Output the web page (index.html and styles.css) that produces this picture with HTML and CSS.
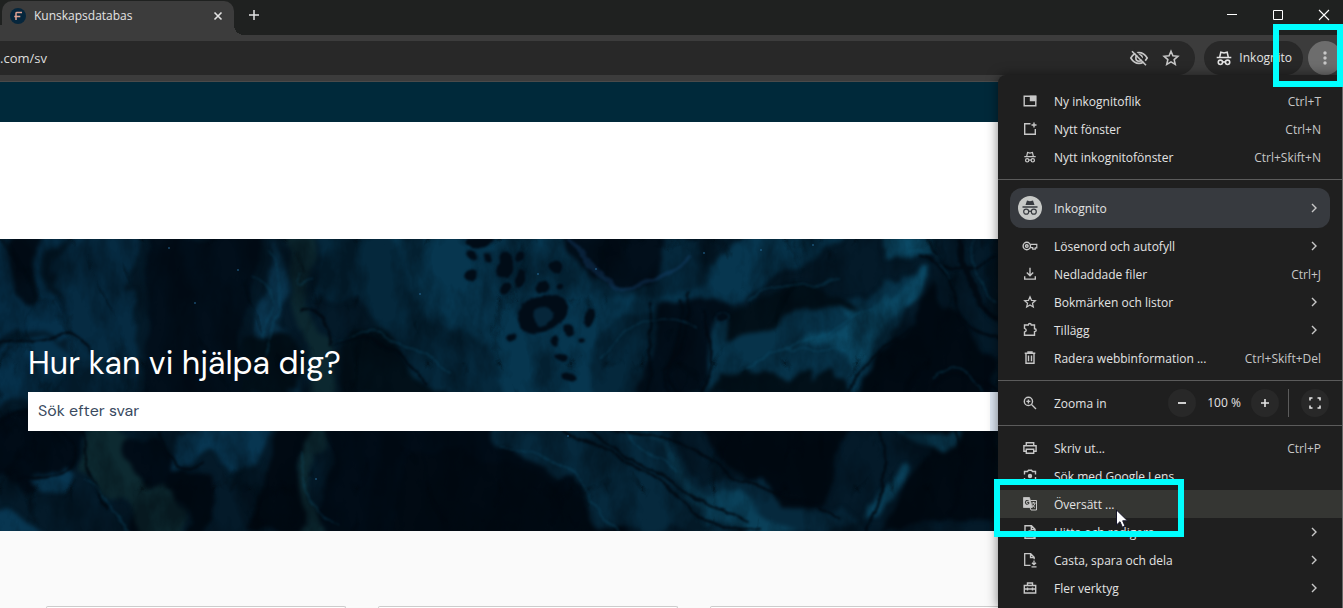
FILE: index.html
```html
<!DOCTYPE html>
<html lang="sv">
<head>
<meta charset="utf-8">
<title>Kunskapsdatabas</title>
<link rel="stylesheet" href="styles.css">
</head>
<body>
<svg class="sprite" aria-hidden="true">
  <symbol id="chevron" viewBox="0 0 16 16"><path d="M6 4l4 4-4 4"/></symbol>
  <symbol id="incognito" viewBox="0 0 16 16"><path d="M1.5 7.5h13M4.2 7.2l1-4.4 2.8.7 2.8-.7 1 4.4M6.8 11.8q1.2-.9 2.4 0"/><circle cx="4.8" cy="11.8" r="1.9"/><circle cx="11.2" cy="11.8" r="1.9"/></symbol>
  <symbol id="star" viewBox="0 0 16 16"><path d="M8 2l1.7 4.1 4.4.4-3.3 2.9 1 4.3L8 11.4l-3.8 2.3 1-4.3-3.3-2.9 4.4-.4z"/></symbol>
</svg>

<header class="browser">
  <div class="tabstrip">
    <div class="tab">
      <svg class="favicon" viewBox="0 0 16 16"><circle cx="8" cy="8" r="8" fill="#06263c"/><path d="M6 12V5.2Q6 4.6 7 4.6h5M4.3 8.4h6" fill="none" stroke="#e0a293" stroke-width="1.5"/></svg>
      <span class="tab-title">Kunskapsdatabas</span>
      <button class="tab-close" aria-label="Stäng flik"><svg class="icon" viewBox="0 0 16 16"><path d="M4.5 4.5l7 7M11.5 4.5l-7 7" stroke-width="1.6"/></svg></button>
    </div>
    <button class="new-tab" aria-label="Ny flik"><svg class="icon" viewBox="0 0 16 16"><path d="M8 3v10M3 8h10" stroke-width="1.5"/></svg></button>
    <div class="window-controls">
      <button aria-label="Minimera"><svg class="icon" viewBox="0 0 16 16"><path d="M3 7.5h10" stroke-width="1"/></svg></button>
      <button aria-label="Maximera"><svg class="icon" viewBox="0 0 16 16"><path d="M3.5 3.5h9v9h-9z" stroke-width="1"/></svg></button>
      <button aria-label="Stäng"><svg class="icon" viewBox="0 0 16 16"><path d="M3 3l10 10M13 3L3 13" stroke-width="1.1"/></svg></button>
    </div>
  </div>
  <div class="toolbar">
    <div class="omnibox">
      <input class="address" type="text" aria-label="Adress" value=".com/sv">
      <button aria-label="Spårning blockerad"><svg class="icon icon-20" viewBox="0 0 20 20"><path d="M1.8 10Q5 4.6 10 4.6T18.200 10Q15 15.400 10 15.400T1.800 10zM13.200 10a3.200 3.200 0 1 1-6.400 0 3.200 3.200 0 0 1 6.400 0z" stroke-width="1.6"/><path d="M4.600 2.400L17.800 15.600" stroke="#282828" stroke-width="2"/><path d="M3 3.200l14 14" stroke-width="1.600"/></svg></button>
      <button aria-label="Lägg till bokmärke"><svg class="icon icon-18"><use href="#star"/></svg></button>
    </div>
    <button class="chip"><svg class="icon icon-18"><use href="#incognito"/></svg>Inkognito</button>
    <button class="kebab" aria-label="Meny"><svg viewBox="0 0 16 16"><circle cx="8" cy="3" r="1.7"/><circle cx="8" cy="8" r="1.7"/><circle cx="8" cy="13" r="1.7"/></svg></button>
  </div>
</header>

<main class="page">
  <div class="site-bar"></div>
  <div class="site-header"></div>
  <section class="hero">
    <svg class="marble" viewBox="0 0 1343 292" preserveAspectRatio="xMinYMin slice" aria-hidden="true">
      <defs>
        <filter id="flow" x="-5%" y="-10%" width="110%" height="120%" color-interpolation-filters="sRGB"><feTurbulence type="fractalNoise" baseFrequency=".018 .012" numOctaves="4" seed="8"/><feDisplacementMap in="SourceGraphic" scale="50" xChannelSelector="R" yChannelSelector="G"/><feGaussianBlur stdDeviation="2"/></filter>
        <filter id="fine" x="-5%" y="-10%" width="110%" height="120%" color-interpolation-filters="sRGB"><feTurbulence type="fractalNoise" baseFrequency=".025" numOctaves="4" seed="3"/><feDisplacementMap in="SourceGraphic" scale="16" xChannelSelector="R" yChannelSelector="G"/><feGaussianBlur stdDeviation="1"/></filter>
        <filter id="veins" x="0" y="0" width="100%" height="100%" color-interpolation-filters="sRGB"><feTurbulence type="turbulence" baseFrequency=".014 .008" numOctaves="5" seed="21"/><feColorMatrix values="0 0 0 0 0  0 0 0 0 .02  0 0 0 0 .04  -7 0 0 0 1"/></filter>
        <filter id="shade" x="0" y="0" width="100%" height="100%" color-interpolation-filters="sRGB"><feTurbulence type="fractalNoise" baseFrequency=".03 .016" numOctaves="5" seed="5"/><feColorMatrix values="0 0 0 0 0  0 0 0 0 .025  0 0 0 0 .05  2.600 0 0 0 -.950"/></filter>
      </defs>
      <rect width="1343" height="292" fill="#041a29"/>
      <g filter="url(#flow)">
        <path fill="#06304a" d="M-20-20H62Q48 50 70 80L60 96-20 100zM-20 110L60 100 84 120 75 160-20 170z"/>
        <path fill="#062b42" d="M64-10H130V170H70z"/>
        <path fill="#020f1b" d="M14-10H46L44 60Q30 90 16 60zM142-10H250L240 170H140z"/>
        <path fill="#0a3650" d="M272 0Q300 20 286 60 268 90 285 120L290 160 270 120Q250 80 264 50z"/>
        <path fill="#05283c" d="M318-10H700V180H400Q390 60 318 60z"/>
        <path fill="#0c2830" d="M292-10H318Q300 60 324 110 340 170 318 220 300 270 360 310H300Q310 180 296 120z"/>
        <path fill="#07364f" d="M390-10H570L600 50 640 60 700 30 740-10H860L740 60 600 90 590 160H500Q490 110 440 80 400 60 390-10z"/>
        <path fill="#020f1b" d="M565-10H665Q665 35 632 48 600 45 565-10zM676-10H720Q702 20 676 0zM660 60Q690 40 740 60L700 160H635Q660 100 660 60z"/>
        <path fill="#021019" d="M335 110Q360 90 400 102 420 150 480 160H340zM250 95Q282 90 288 120L285 155H240Q240 120 250 95z"/>
        <path fill="#07334a" d="M710 80Q760 60 820 70L880 30 912 40 905 80 870 140 845 160H700z"/>
        <path fill="#0b4965" d="M835 66L880 45Q900 60 908 30L918 30 920 66 882 85 866 124 846 138 830 116 800 114 830 96 855 78zM890-10H930L915 20 880 12z"/>
        <path fill="#021019" d="M735 70Q790 35 860 62 810 70 770 90L730 110zM720 138Q760 120 820 136L850 160H700z"/>
        <path fill="#010a13" d="M930 50L960 80 990 120V170H850Q880 120 920 80z"/>
        <path fill="#010c17" d="M-20 176Q40 170 80 184 100 250 50 240L30 255-20 230zM120 190Q170 180 180 240 196 270 160 310H120zM325 190H520Q550 230 650 310H330z"/>
        <path fill="#0d2a31" d="M90 185H130Q120 230 145 250 190 230 182 300H140Q130 270 88 240z"/>
        <path fill="#083651" d="M36 236Q70 222 80 242 60 268 38 250zM-20 270L20 270 44 300H-20zM175 180H268Q284 210 250 240 230 250 225 210 200 205 170 226z"/>
        <path fill="#010a13" d="M170 226Q208 210 210 252L200 310H188Q198 250 165 250zM285 188H308L302 240 316 292H240Q280 240 285 188z"/>
        <path fill="#06293d" d="M500 185H640Q680 240 760 250 840 270 870 292H590Q600 250 500 210z"/>
        <path fill="#010a13" d="M690 180H850Q848 230 820 260 730 260 690 180zM920 180H1010V292H880Q930 230 920 180zM400 225Q550 200 610 310H400z"/>
        <path fill="#0a4059" d="M900 186H955L948 205Q915 205 900 190zM890 235Q910 210 902 255L870 280zM620 185Q680 240 750 262L790 292H740Q680 250 620 185z"/>
        <rect x="998" y="-20" width="400" height="340" fill="#03121d"/>
      </g>
      <rect width="1343" height="292" filter="url(#shade)" opacity=".45"/>
      <rect width="1343" height="292" filter="url(#veins)" opacity=".4"/>
      <g filter="url(#fine)" fill="none" stroke="#010810" stroke-width="2.500" opacity=".85">
        <path d="M-10 102Q40 110 62 95T95 130M0 180Q50 160 70 200T20 240M85 185Q80 230 110 270M160 190Q165 250 205 225M300 72Q330 70 333 105 360 85 395 110L430 145M680 60Q688 105 665 130L663 160M690 55Q690 100 675 120T680 160M705 70Q720 120 700 160M650 60Q658 110 640 165"/>
        <path d="M600 190Q700 200 730 240 780 250 840 280M560 190Q640 220 680 260T760 292M580 186Q660 240 750 285M880 190Q890 240 870 292M930 0Q940 50 998 20M920 20Q950 25 955 60T998 100M905 90Q860 120 850 160M935 150Q950 120 998 150M955 190Q970 230 950 275"/>
        <path d="M960 0Q970 60 998 80" stroke-width="6"/>
      </g>
      <g filter="url(#fine)" fill="none" stroke="#0f5f80" stroke-width="1.500" opacity=".3">
        <path d="M254 35Q283 60 264 100M268 10Q290 50 267 120M302 30Q290 60 312 38M333 105Q360 80 396 102T450 130M85 240Q110 260 120 280T145 292M300 215Q300 275 340 285M178 190Q230 190 270 188M500 210Q560 210 590 260T630 292M620 188Q650 220 680 235M935 140Q960 115 982 150M910 15Q940 10 950 40M975 0Q970 40 998 60M750 60Q790 45 840 40M700 90Q650 60 600 120M780 115Q850 80 875 70M740 130Q800 100 850 110"/>
        <path stroke="#1c4f85" stroke-width="4" d="M565 0Q590 35 620 48 660 45 690 18"/>
      </g>
      <g class="cells" filter="url(#fine)">
        <ellipse cx="480" cy="4" rx="12" ry="7"/><circle cx="471" cy="17" r="5"/><circle cx="485" cy="20" r="4"/><circle cx="470" cy="36" r="6"/>
        <ellipse cx="504" cy="27" rx="9" ry="12"/><ellipse cx="521" cy="40" rx="6" ry="13"/><circle cx="507" cy="50" r="6"/><circle cx="519" cy="18" r="5"/><circle cx="541" cy="48" r="6"/><circle cx="556" cy="28" r="7"/><ellipse cx="560" cy="47" rx="5" ry="3"/>
        <ellipse cx="544" cy="75" rx="29" ry="17" transform="rotate(-28 544 75)"/><ellipse cx="542" cy="78" rx="11" ry="7" transform="rotate(-40 542 78)" fill="#06263a"/><ellipse cx="588" cy="77" rx="5" ry="11" transform="rotate(20 588 77)"/><circle cx="568" cy="91" r="6"/><circle cx="554" cy="103" r="5"/><circle cx="580" cy="101" r="3"/><circle cx="511" cy="98" r="5"/><ellipse cx="562" cy="118" rx="7" ry="5"/><ellipse cx="567" cy="139" rx="8" ry="5"/><circle cx="722" cy="78" r="6"/>
      </g>
      <g fill="#2b74a6" opacity=".6"><circle cx="169" cy="9" r="1"/><circle cx="238" cy="31" r="1"/><circle cx="195" cy="64" r="1"/><circle cx="420" cy="55" r="1"/><circle cx="538" cy="35" r="1"/><circle cx="596" cy="30" r="1"/><circle cx="761" cy="11" r="1"/><circle cx="813" cy="6" r="1"/><circle cx="704" cy="14" r="1"/><circle cx="568" cy="197" r="1"/><circle cx="316" cy="240" r="1"/></g>
    </svg>
    <div class="hero-content">
      <h1>Hur kan vi hjälpa dig?</h1>
      <form class="search"><input type="search" aria-label="Sök efter svar" placeholder="Sök efter svar"><button type="button" aria-label="Sök"></button></form>
    </div>
  </section>
  <section class="cards"><article></article><article></article><article></article><article></article></section>
</main>

<nav class="menu" aria-label="Webbläsarmeny">
  <button class="row"><svg class="icon" viewBox="0 0 16 16"><path d="M2.200 3.200h11.600v9.600H2.200z"/><path d="M8.500 3.500h5v4h-5z" fill="currentColor"/></svg><span>Ny inkognitoflik</span><kbd>Ctrl+T</kbd></button>
  <button class="row"><svg class="icon" viewBox="0 0 16 16"><path d="M8.500 2.700H2.700v10.600h10.600V8M12 1.500v5M9.500 4h5"/></svg><span>Nytt fönster</span><kbd>Ctrl+N</kbd></button>
  <button class="row"><svg class="icon icon-14"><use href="#incognito"/></svg><span>Nytt inkognitofönster</span><kbd>Ctrl+Skift+N</kbd></button>
  <hr>
  <button class="row profile"><svg class="avatar" viewBox="0 0 24 24"><circle cx="12" cy="12" r="12" fill="#c7c9c7"/><path d="M7.500 9l1.500-4.500 3 .7 3-.7L16.500 9z" fill="#373a3f"/><path d="M4.500 11h15M10.800 15.500q1.200-.8 2.400 0" fill="none" stroke="#373a3f" stroke-width="1.300"/><g fill="none" stroke="#373a3f" stroke-width="1.200"><circle cx="8.200" cy="15.700" r="2.500"/><circle cx="15.800" cy="15.700" r="2.500"/></g></svg><span>Inkognito</span><svg class="icon more"><use href="#chevron"/></svg></button>
  <button class="row"><svg class="icon" viewBox="0 0 16 16"><circle cx="4.800" cy="8" r="3.700"/><circle cx="4.800" cy="8" r="1.300"/><path d="M8.300 6.300h6.500v3.500h-1.500v1.400h-2.600V9.700H8.300" stroke-width="1.200"/></svg><span>Lösenord och autofyll</span><svg class="icon more"><use href="#chevron"/></svg></button>
  <button class="row"><svg class="icon" viewBox="0 0 16 16"><path d="M8 1.800V9.500M4.800 6.500L8 9.700l3.200-3.200M2.700 10.200v2.900h10.600v-2.900"/></svg><span>Nedladdade filer</span><kbd>Ctrl+J</kbd></button>
  <button class="row"><svg class="icon icon-14"><use href="#star"/></svg><span>Bokmärken och listor</span><svg class="icon more"><use href="#chevron"/></svg></button>
  <button class="row"><svg class="icon" viewBox="0 0 16 16"><path d="M2.500 3h3.800q.2-1.500 1.500-1.500T9.300 3h3.200v3.800q1.700.1 1.700 1.400t-1.700 1.400v3.700h-10V10q1.700-.4 1.700-1.800T2.500 6.300z"/></svg><span>Tillägg</span><svg class="icon more"><use href="#chevron"/></svg></button>
  <button class="row"><svg class="icon" viewBox="0 0 16 16"><path d="M2.700 3.200h10.600M6 3V1.900h4V3M4 3.500v9.800h8V3.500M6.500 5.500v5.800M9.500 5.500v5.800"/></svg><span>Radera webbinformation ...</span><kbd>Ctrl+Skift+Del</kbd></button>
  <hr>
  <div class="row zoom">
    <svg class="icon" viewBox="0 0 16 16"><circle cx="6.400" cy="6.400" r="4.100"/><path d="M9.500 9.500l4.500 4.500M6.400 4.400v4M4.400 6.400h4" /></svg><span>Zooma in</span>
    <button aria-label="Zooma ut"><svg class="icon" viewBox="0 0 16 16"><path d="M4 8h8" stroke-width="1.800"/></svg></button>
    <output>100 %</output>
    <button aria-label="Zooma in"><svg class="icon" viewBox="0 0 16 16"><path d="M4 8h8M8 4v8" stroke-width="1.600"/></svg></button>
    <i class="divider"></i>
    <button aria-label="Helskärm"><svg class="icon" viewBox="0 0 16 16"><path d="M5.500 3H3v2.500M10.500 3H13v2.500M3 10.500V13h2.500M13 10.500V13h-2.500" stroke-width="1.600"/></svg></button>
  </div>
  <hr>
  <button class="row"><svg class="icon" viewBox="0 0 16 16"><path d="M4.300 5.300V2.700h7.400v2.600M4 11.300H1.900V5.700h12.200v5.600H12M4.300 9.300h7.400v4H4.300z"/></svg><span>Skriv ut...</span><kbd>Ctrl+P</kbd></button>
  <button class="row"><svg class="icon" viewBox="0 0 16 16"><path d="M2.500 6.500v-3h3l1-1.200h3l1 1.200h3v3M2.500 10v3.300H8M13.500 9v2"/><circle cx="8" cy="8" r="1.500" fill="currentColor"/><circle cx="12.500" cy="13" r=".6"/></svg><span>Sök med Google Lens</span></button>
  <button class="row selected"><svg class="icon" viewBox="0 0 16 16"><path d="M1.500 1.500h6l2.700 10H1.500z" fill="currentColor" stroke-width=".8"/><path d="M8.500 4.500h6v9.500H9L8 11.500M9.500 7h4M11.500 6v1.200M13 7.200q-.7 2.800-3 4M10.200 8.500q1 2 2.800 3" stroke-width="1"/><path d="M6.600 5q-2.600-1.500-3.200 1.400.7 2.900 3.300 1.200V6.500H5.200" stroke="#353633" stroke-width="1.100"/></svg><span>Översätt ...</span></button>
  <button class="row"><svg class="icon" viewBox="0 0 16 16"><path d="M9.500 1.800H3v12.400h10V5.300zM9.300 2v3.500h3.500"/><circle cx="8" cy="9" r="2"/><path d="M9.500 10.500l3 3"/></svg><span>Hitta och redigera</span><svg class="icon more"><use href="#chevron"/></svg></button>
  <button class="row"><svg class="icon" viewBox="0 0 16 16"><path d="M8.500 13.300H2.700V1.700h6l3.500 3.500v2M8.500 2v3.500H12M12 8.500v4M10 10.700l2 2 2-2M9.500 14.800h5" stroke-width="1.300"/></svg><span>Casta, spara och dela</span><svg class="icon more"><use href="#chevron"/></svg></button>
  <button class="row"><svg class="icon" viewBox="0 0 16 16"><path d="M2.300 9V5.500h11.400V9M5.500 5.300V3h5v2.300M2.300 9h11.400v4H2.300zM5.500 7.500v3M10.500 7.500v3"/></svg><span>Fler verktyg</span><svg class="icon more"><use href="#chevron"/></svg></button>
</nav>

<div class="callout callout-kebab"></div>
<div class="callout callout-translate"></div>
<svg class="cursor" viewBox="0 0 14 20" aria-hidden="true"><path d="M1.500 1v15l3.500-3.300 2.400 5.500 2.600-1.100-2.300-5.300h4.800z" fill="#fff" stroke="#16162a"/></svg>
</body>
</html>
```

FILE: styles.css
```css
* { box-sizing: border-box; }

body {
  position: relative;
  display: flex;
  flex-direction: column;
  height: 100vh;
  margin: 0;
  overflow: hidden;
  background: #fafafa;
  font: 12px/16px "Segoe UI", "Open Sans", sans-serif;
}

button {
  display: flex;
  align-items: center;
  justify-content: center;
  padding: 0;
  border: 0;
  background: none;
  color: inherit;
  font: inherit;
}

input { min-width: 0; border: 0; outline: 0; border-radius: 0; }

.sprite { position: absolute; width: 0; height: 0; }

.icon {
  flex: none;
  width: 16px;
  height: 16px;
  fill: none;
  stroke: currentColor;
  stroke-width: 1.4;
}
.icon-14 { width: 14px; height: 14px; margin: 0 1px; }
.icon-18 { width: 18px; height: 18px; }
.icon-20 { width: 20px; height: 20px; }

/* Browser frame */
.browser { flex: none; background: #3c3c3c; color: #e3e3e3; border-bottom: 1px solid #4a4a4a; }

.tabstrip {
  display: flex;
  height: 35px;
  padding-top: 1px;
  background: linear-gradient(0deg, #3c3c3c 10px, transparent 10px) 0 0 / 4px 100% no-repeat, #1f2120;
}

.tab {
  position: relative;
  display: flex;
  align-items: center;
  gap: 8px;
  width: 232px;
  margin-left: 2px;
  padding: 0 8px 4px;
  border-radius: 10px 10px 0 0;
  background: #3c3c3c;
}
.tab::after {
  content: "";
  position: absolute;
  left: 100%;
  bottom: 0;
  width: 10px;
  height: 10px;
  background: radial-gradient(circle at 100% 0, transparent 10px, #3c3c3c 10px);
}
.favicon { width: 16px; height: 16px; }
.tab-title { flex: 1; }
.new-tab { width: 40px; padding-bottom: 6px; }
.window-controls { display: flex; margin-left: auto; color: #fff; }
.window-controls button { width: 46px; padding-bottom: 6px; }
.window-controls button:last-child { width: 42px; padding-left: 4px; }

.toolbar { display: flex; padding: 6px 1px 6px 0; }
.omnibox {
  display: flex;
  flex: 1;
  gap: 13px;
  height: 34px;
  margin-right: 9px;
  padding-right: 15px;
  border-radius: 0 17px 17px 0;
  background: #282828;
  color: #c7c7c7;
}
.address {
  flex: 1;
  padding: 0;
  background: none;
  color: #dedede;
  font: 13px/20px "Segoe UI", "Open Sans", sans-serif;
}
.chip {
  gap: 6px;
  margin-right: 5px;
  padding: 0 11px;
  border-radius: 17px;
  background: #282828;
}
.kebab { width: 34px; height: 34px; border-radius: 50%; background: #6d6d6d; }
.kebab svg { width: 16px; height: 16px; fill: #c7c7c7; }

/* Site */
.page { flex: 1; display: flex; flex-direction: column; min-height: 0; overflow: hidden; }
.site-bar { flex: none; height: 40px; background: #00293a; }
.site-header { flex: none; height: 117px; background: #fff; }

.hero { position: relative; flex: none; padding: 104px 28px 100px; background: #031522; overflow: hidden; }
.marble { position: absolute; inset: 0; width: 100%; height: 100%; }
.cells { fill: #010c17; stroke: #06263a; }
.hero-content { position: relative; }
.hero h1 {
  margin: 0 0 9px;
  color: #fff;
  font: 400 32px/40px "DM Sans", Inter, sans-serif;
}
.search { display: flex; height: 39px; }
.search input {
  flex: 1;
  padding: 0 10px 2px;
  background: #fff;
  font: 16px/24px "DM Sans", Inter, sans-serif;
}
.search input::placeholder { color: #3a4a60; opacity: 1; }
.search button { width: 325px; background: #dfe9f5; }

.cards {
  display: grid;
  flex: 1;
  grid-template-columns: repeat(4, 300px);
  gap: 32px;
  min-height: 0;
  padding: 75px 46px 0;
}
.cards article { border: 1px solid #ccc; border-bottom: 0; border-radius: 4px 4px 0 0; background: #fff; }

/* Drop-down menu */
.menu {
  position: absolute;
  top: 75px;
  right: 0;
  bottom: 0;
  width: 345px;
  padding-top: 12px;
  overflow: hidden;
  border-right: 1px solid #666;
  border-top-left-radius: 8px;
  background: #1f1f1f;
  color: #e3e3e3;
  box-shadow: 0 0 12px rgba(0, 0, 0, .5);
}
.row {
  display: flex;
  align-items: center;
  justify-content: flex-start;
  gap: 16px;
  width: 100%;
  height: 28px;
  padding: 0 21px 0 24px;
  text-align: left;
}
.row > .icon { color: #c7c7c7; }
.row span { flex: 1; padding-top: 2px; white-space: nowrap; }
.row kbd { padding-top: 2px; color: #c7c7c7; font: inherit; }
.row .more { margin-right: -1px; }
.menu hr { height: 1px; margin: 8px 0; border: 0; background: #5b5b5b; }
.selected { background: #353633; }

.profile {
  gap: 12px;
  width: calc(100% - 24px);
  height: 40px;
  margin: 0 12px 4px;
  padding: 0 9px 0 8px;
  border-radius: 12px;
  background: #373a3f;
}
.avatar { width: 24px; height: 24px; }

.zoom { gap: 0; padding-right: 13px; }
.zoom > .icon { margin-right: 16px; }
.zoom button { width: 28px; height: 28px; border-radius: 50%; background: #282828; }
.zoom output { width: 34px; margin: 0 10px 0 11px; text-align: center; white-space: nowrap; }
.divider { width: 1px; height: 28px; margin: 0 12px 0 9px; background: #5b5b5b; }

/* Annotations */
.callout { position: absolute; border: 6px solid #0ff; }
.callout-kebab { top: 24px; right: 0; width: 70px; height: 63px; }
.callout-translate { top: 479px; right: 159px; width: 190px; height: 58px; }
.cursor { position: absolute; top: 509px; right: 214px; width: 14px; height: 20px; }
```
